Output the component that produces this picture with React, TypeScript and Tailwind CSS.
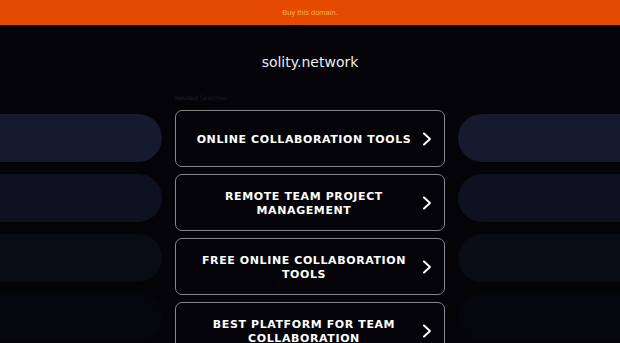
const links = [
    "ONLINE COLLABORATION TOOLS",
    "REMOTE TEAM PROJECT MANAGEMENT",
    "FREE ONLINE COLLABORATION TOOLS",
    "BEST PLATFORM FOR TEAM COLLABORATION",
];

const pillColors = ["bg-[#151a2e]", "bg-[#0e111f]", "bg-[#090b15]", "bg-[#05060d]"];

function Chevron() {
    return (
        <svg width="10" height="14" viewBox="0 0 10 14" fill="none" className="shrink-0">
            <polyline points="2,1.5 8,7 2,12.5" stroke="white" strokeWidth="2" strokeLinecap="round" strokeLinejoin="round" />
        </svg>
    );
}

export default function App() {
    return (
        <div className="h-[343px] overflow-hidden bg-[#040408] font-['DejaVu_Sans',sans-serif]">
            {/* Top banner */}
            <div className="flex h-[25px] items-center justify-center bg-[#e44b00]">
                <span className="font-['Liberation_Sans',sans-serif] text-[7.5px] leading-none text-[#f8ab55]">
                    Buy this domain.
                </span>
            </div>

            {/* Domain */}
            <div className="h-[65px] pt-[28px] text-center">
                <h1 className="text-[14px] leading-[18px] text-[#ececf0]">solity.network</h1>
            </div>

            {/* Related searches */}
            <div className="grid grid-cols-[1fr_270px_1fr] gap-x-[13px]">
                <div className="flex flex-col gap-3 pt-[24px]">
                    {pillColors.map((c) => (
                        <div key={c} className={`h-[48px] rounded-r-full ${c}`} />
                    ))}
                </div>

                <div>
                    <div className="mb-[4px] h-[16px] text-[6px] leading-[16px] text-[#1a1f36]">
                        Related Searches
                    </div>
                    <div className="flex flex-col gap-[7px]">
                        {links.map((label) => (
                            <a
                                key={label}
                                href="#"
                                className="flex h-[57px] items-center rounded-[7px] border-[1.5px] border-[#86868c] pl-[10px] pr-[12px]"
                            >
                                <span className="flex-1 pt-[3px] text-center text-[11px] font-bold leading-[14.5px] tracking-[0.6px] text-white">
                                    {label}
                                </span>
                                <Chevron />
                            </a>
                        ))}
                    </div>
                </div>

                <div className="flex flex-col gap-3 pt-[24px]">
                    {pillColors.map((c) => (
                        <div key={c} className={`h-[48px] rounded-l-full ${c}`} />
                    ))}
                </div>
            </div>
        </div>
    );
}
